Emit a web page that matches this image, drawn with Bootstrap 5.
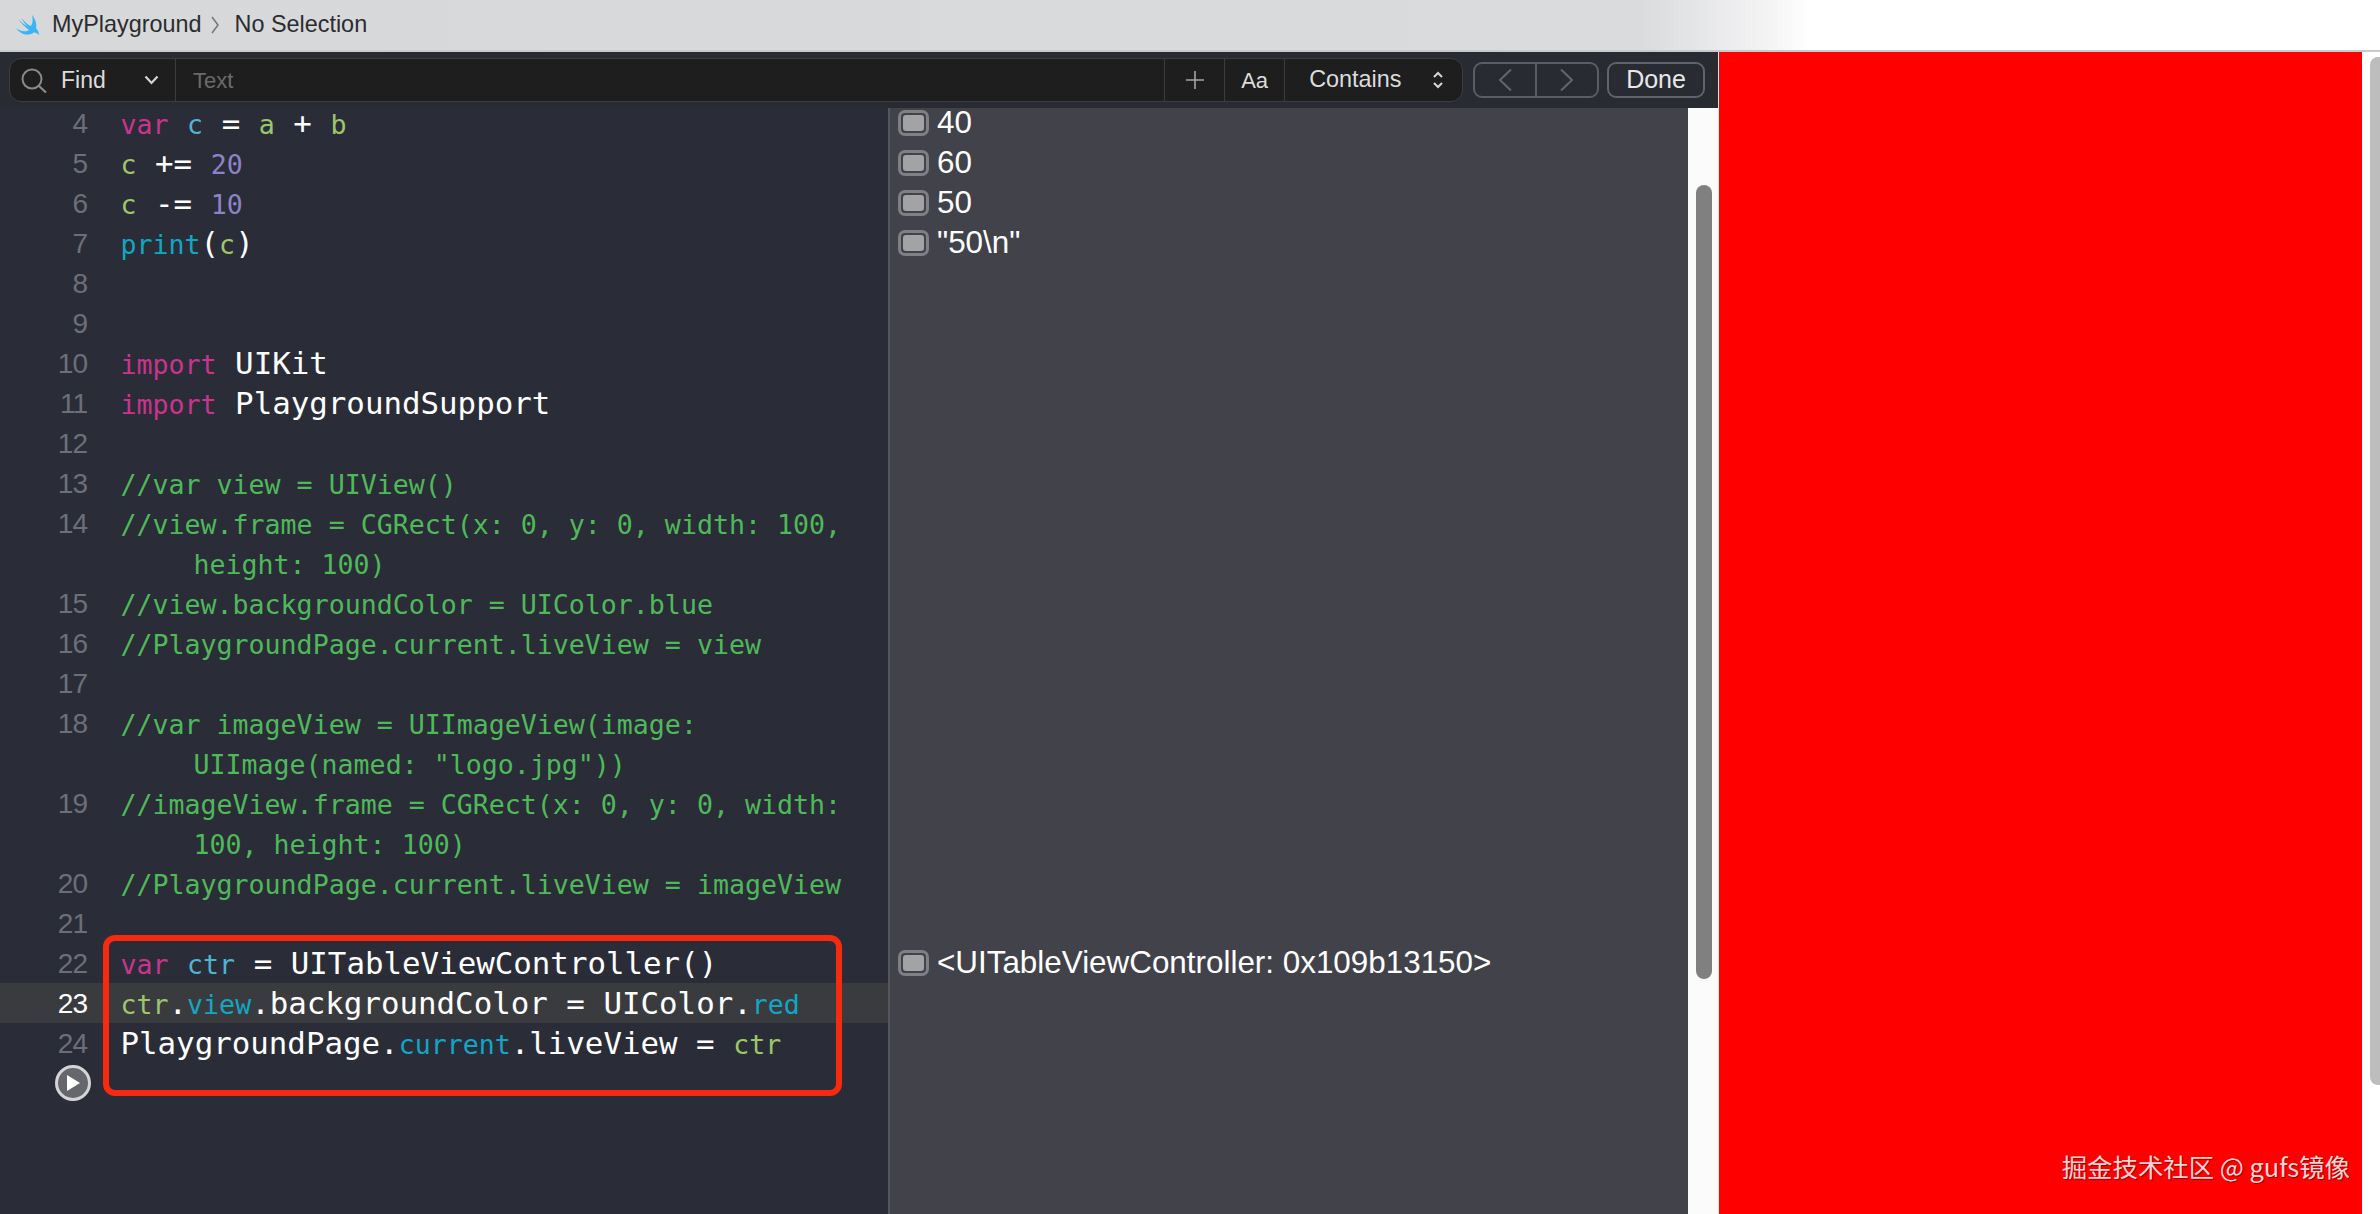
<!DOCTYPE html>
<html lang="en">
<head>
<meta charset="utf-8">
<title>MyPlayground</title>
<link href="https://cdn.jsdelivr.net/npm/bootstrap@5.3.0/dist/css/bootstrap.min.css" rel="stylesheet">
<style>
html,body{height:100%;margin:0;background:#fff;overflow:hidden}
.screen{width:2380px;height:1214px;overflow:hidden;font-family:"Liberation Sans",sans-serif}
.titlebar{height:52px;background:linear-gradient(90deg,#d6d8d9 0,#dadbdd 1640px,#f4f4f5 1770px,#fff 1810px);border-bottom:2px solid #c9cacc;padding-left:16px;gap:12px;color:#2b2c2f;font-size:23.4px}
.crumb-sep{width:8px;height:18px;margin:0 4px 0 -3px}
.body-row{height:1162px}
.xcode{width:1719px;background:#2a2d37;border-right:1px solid #e8e8e8}
.findbar{height:56px;background:#292b33;padding:6px 13px 6px 9px}
.findfield{height:44px;width:1455px;background:#1e1e1f;border:1px solid #3c3d40;border-radius:12px;color:#dcdcdc;font-size:23px}
.find-left{width:166px;padding-left:11px;height:100%;border-right:1px solid #3a3b3e}
.find-word{margin-left:14px}
.find-text{color:#6a6a6c;padding-left:17px;font-size:22px}
.fcell{height:100%;border-left:1px solid #3a3b3e;padding:0 10px}
.fc-plus,.fc-aa{width:60px}
.fc-aa{font-size:22px}
.fc-contains{width:178px;padding-left:24px;font-size:23.4px}
.navgroup{width:126px;height:36px;margin-left:10px;border:2px solid #5a5d65;border-radius:9px}
.navgroup>div{flex:1;height:100%}
.navgroup>div+div{border-left:2px solid #5a5d65}
.donebtn{width:98px;height:36px;margin-left:8px;border:2px solid #5f626a;border-radius:9px;color:#e8e8e8;font-size:25px}
.panes{height:1106px;position:relative}
.editor{width:888px;background:#2a2d37;font-family:"DejaVu Sans Mono",monospace;font-size:30.8px}
.scrolled{margin-top:-5px}
.ln{height:40px;line-height:40px;white-space:pre;color:#fff}
.ln-no{width:87px;text-align:right;margin-right:33.5px;color:#6c6f79;flex:none;font-family:"Liberation Sans",sans-serif;font-size:28px;line-height:42px;letter-spacing:-1px}
.ln-cur{background:#3a3b3f}
.ln-cur .ln-no{color:#fff}
.results{width:800px;background:#41424a;border-left:2px solid #55565e;color:#fff;font-size:31.4px}
.res{height:40px;line-height:40px;padding-left:8px}
.res-spacer{height:680px}
.res-ico{width:31px;height:26px;border-radius:7px;border:3px solid #7f8086;margin-right:8px;padding:2px;flex:none}
.res-ico i{display:block;width:100%;height:100%;background:#a3a3a5;border-radius:3px}
.gutter{width:30px;background:#fafbfa;padding-left:8px}
.thumb{width:16px;height:794px;margin-top:77px;background:#808080;border-radius:8px}
.kw,.dec,.va,.num,.fn,.cm{font-size:26.6px}
.kw{color:#c9348f}.dec{color:#4fb3d2}.va{color:#9bc66a}.num{color:#8e83c9}.fn{color:#12a6c4}.cm{color:#4fb95a}
.indent{padding-left:73px}
.redbox{position:absolute;left:103px;top:827px;width:739px;height:161px;border:6px solid #f52a0e;border-radius:12px}
.playbtn{position:absolute;left:55px;top:957px;width:36px;height:36px;border-radius:50%;border:3px solid #d4d4d6;background:#66676c}
.canvas-red{width:644px;background:#f00;position:relative}
.wm{position:absolute;right:12px;bottom:30px;color:rgba(255,255,255,.85);font-family:"Noto Sans CJK SC","Noto Sans",sans-serif;font-size:25.4px;line-height:36px;text-shadow:1px 1px 1px rgba(70,0,0,.55)}
.sidebar-r{flex:1;padding:5px 0 0 8px}
.sb-thumb{width:10px;height:1028px;background:#bdbdbd;border-radius:8px 0 0 8px}
</style>
</head>
<body>
<div class="screen d-flex flex-column">
  <div class="titlebar d-flex align-items-center">
    <svg width="24" height="21" viewBox="0 0 24 21"><path d="M16 0C20 5 21 10 20 13C22 15 23 18 23 20C21 18 19 17 17 18C12 21 5 20 0 13C5 17 10 17 13 15C9 12 5 8 2 4C5 7 9 10 12 12C9 9 7 6 5 3C9 7 12 10 15 11C17 8 17 4 16 0z" fill="#3ab4f4"/></svg>
    <span>MyPlayground</span>
    <svg class="crumb-sep" viewBox="0 0 8 18"><path d="M1 1l6 8-6 8" fill="none" stroke="#77787b" stroke-width="1.600"/></svg>
    <span>No Selection</span>
  </div>
  <div class="body-row d-flex">
    <div class="xcode d-flex flex-column">
      <div class="findbar d-flex align-items-center">
        <div class="findfield d-flex align-items-center">
          <div class="find-left d-flex align-items-center">
            <svg width="26" height="25" viewBox="0 0 26 25"><circle cx="11" cy="11" r="9.500" fill="none" stroke="#8a8a8c" stroke-width="2"/><path d="M18 18l7 6.500" stroke="#8a8a8c" stroke-width="2.200"/></svg>
            <span class="find-word">Find</span>
            <svg class="ms-auto me-3" width="15" height="10" viewBox="0 0 15 10"><path d="M1.500 1.500L7.500 8l6-6.500" fill="none" stroke="#d5d5d5" stroke-width="2.200"/></svg>
          </div>
          <div class="find-text flex-grow-1">Text</div>
          <div class="fcell fc-plus d-flex align-items-center justify-content-center"><svg width="20" height="20" viewBox="0 0 20 20"><path d="M10 1v18M1 10h18" stroke="#a5a5a7" stroke-width="1.600"/></svg></div>
          <div class="fcell fc-aa d-flex align-items-center justify-content-center">Aa</div>
          <div class="fcell fc-contains d-flex align-items-center">Contains<svg class="ms-auto me-2" width="12" height="18" viewBox="0 0 12 18"><path d="M2 6l4-4 4 4M2 12l4 4 4-4" fill="none" stroke="#d5d5d5" stroke-width="2"/></svg></div>
        </div>
        <div class="navgroup d-flex">
          <div class="d-flex align-items-center justify-content-center"><svg width="14" height="24" viewBox="0 0 14 24"><path d="M13 1.500L2 12l11 10.500" fill="none" stroke="#63666d" stroke-width="2"/></svg></div>
          <div class="d-flex align-items-center justify-content-center"><svg width="14" height="24" viewBox="0 0 14 24"><path d="M1 1.500L12 12 1 22.500" fill="none" stroke="#63666d" stroke-width="2"/></svg></div>
        </div>
        <div class="donebtn d-flex align-items-center justify-content-center">Done</div>
      </div>
      <div class="panes d-flex">
        <div class="editor"><div class="scrolled">
          <div class="ln d-flex"><span class="ln-no">4</span><span><span class="kw">var</span> <span class="dec">c</span> = <span class="va">a</span> + <span class="va">b</span></span></div>
          <div class="ln d-flex"><span class="ln-no">5</span><span><span class="va">c</span> += <span class="num">20</span></span></div>
          <div class="ln d-flex"><span class="ln-no">6</span><span><span class="va">c</span> -= <span class="num">10</span></span></div>
          <div class="ln d-flex"><span class="ln-no">7</span><span><span class="fn">print</span>(<span class="va">c</span>)</span></div>
          <div class="ln d-flex"><span class="ln-no">8</span></div>
          <div class="ln d-flex"><span class="ln-no">9</span></div>
          <div class="ln d-flex"><span class="ln-no">10</span><span><span class="kw">import</span> UIKit</span></div>
          <div class="ln d-flex"><span class="ln-no">11</span><span><span class="kw">import</span> PlaygroundSupport</span></div>
          <div class="ln d-flex"><span class="ln-no">12</span></div>
          <div class="ln d-flex"><span class="ln-no">13</span><span><span class="cm">//var view = UIView()</span></span></div>
          <div class="ln d-flex"><span class="ln-no">14</span><span><span class="cm">//view.frame = CGRect(x: 0, y: 0, width: 100,</span></span></div>
          <div class="ln d-flex"><span class="ln-no"></span><span class="indent"><span class="cm">height: 100)</span></span></div>
          <div class="ln d-flex"><span class="ln-no">15</span><span><span class="cm">//view.backgroundColor = UIColor.blue</span></span></div>
          <div class="ln d-flex"><span class="ln-no">16</span><span><span class="cm">//PlaygroundPage.current.liveView = view</span></span></div>
          <div class="ln d-flex"><span class="ln-no">17</span></div>
          <div class="ln d-flex"><span class="ln-no">18</span><span><span class="cm">//var imageView = UIImageView(image:</span></span></div>
          <div class="ln d-flex"><span class="ln-no"></span><span class="indent"><span class="cm">UIImage(named: "logo.jpg"))</span></span></div>
          <div class="ln d-flex"><span class="ln-no">19</span><span><span class="cm">//imageView.frame = CGRect(x: 0, y: 0, width:</span></span></div>
          <div class="ln d-flex"><span class="ln-no"></span><span class="indent"><span class="cm">100, height: 100)</span></span></div>
          <div class="ln d-flex"><span class="ln-no">20</span><span><span class="cm">//PlaygroundPage.current.liveView = imageView</span></span></div>
          <div class="ln d-flex"><span class="ln-no">21</span></div>
          <div class="ln d-flex"><span class="ln-no">22</span><span><span class="kw">var</span> <span class="dec">ctr</span> = UITableViewController()</span></div>
          <div class="ln d-flex ln-cur"><span class="ln-no">23</span><span><span class="va">ctr</span>.<span class="fn">view</span>.backgroundColor = UIColor.<span class="fn">red</span></span></div>
          <div class="ln d-flex"><span class="ln-no">24</span><span>PlaygroundPage.<span class="fn">current</span>.liveView = <span class="va">ctr</span></span></div>
        </div></div>
        <div class="results"><div class="scrolled">
          <div class="res d-flex align-items-center"><span class="res-ico"><i></i></span>40</div>
          <div class="res d-flex align-items-center"><span class="res-ico"><i></i></span>60</div>
          <div class="res d-flex align-items-center"><span class="res-ico"><i></i></span>50</div>
          <div class="res d-flex align-items-center"><span class="res-ico"><i></i></span>"50\n"</div>
          <div class="res-spacer"></div>
          <div class="res d-flex align-items-center"><span class="res-ico"><i></i></span>&lt;UITableViewController: 0x109b13150&gt;</div>
        </div></div>
        <div class="gutter"><div class="thumb"></div></div>
        <div class="redbox"></div>
        <div class="playbtn d-flex align-items-center justify-content-center"><svg width="16" height="18" viewBox="0 0 16 18"><path d="M2 1l13 8-13 8z" fill="#fff"/></svg></div>
      </div>
    </div>
    <div class="canvas-red"><div class="wm">掘金技术社区 @ gufs镜像</div></div>
    <div class="sidebar-r"><div class="sb-thumb"></div></div>
  </div>
</div>
<script src="https://cdn.jsdelivr.net/npm/bootstrap@5.3.0/dist/js/bootstrap.bundle.min.js"></script>
</body>
</html>
